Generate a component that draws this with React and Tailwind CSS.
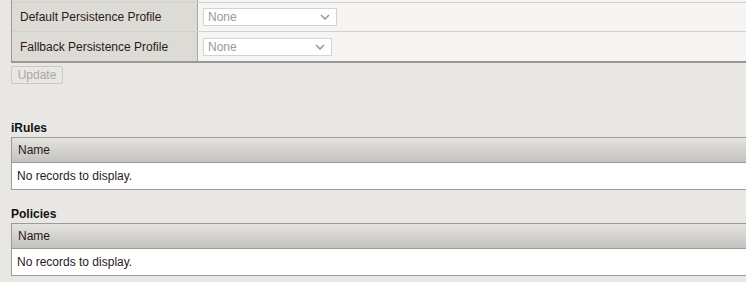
import React from "react";

function Chevron() {
  return (
    <svg width="10" height="6" viewBox="0 0 10 6" className="shrink-0">
      <path d="M1 1 L5 5 L9 1" fill="none" stroke="#9a9a9a" strokeWidth="1.6" />
    </svg>
  );
}

function Select({ w }) {
  return (
    <div
      className={`flex h-[18px] items-center justify-between border border-[#d4d3d0] bg-white pl-[4px] pr-[6px] text-[12px] text-[#9a9a9a] ${w}`}
    >
      <span>None</span>
      <Chevron />
    </div>
  );
}

function Row({ label, w, last }) {
  return (
    <div className={`flex h-[29px] ${last ? "" : "border-b border-[#d3d1cc]"}`}>
      <div className="flex w-[186px] items-center border-r border-[#a8a6a2] bg-[#dddbd6] pl-[8px] text-[12px] text-[#2a1a1a]">
        {label}
      </div>
      <div className="flex flex-1 items-center bg-[#f6f5f3] pl-[5px]">
        <Select w={w} />
      </div>
    </div>
  );
}

function Grid({ title, mt }) {
  return (
    <div className={mt}>
      <div className="h-[16px] pl-[11px] text-[12px] font-bold leading-[16px] text-[#111]">{title}</div>
      <div className="ml-[11px] mt-[1px] w-[800px] border border-[#9c9b98] bg-white">
        <div className="flex h-[25px] items-center border-b border-[#9c9b98] bg-gradient-to-b from-[#e4e3e0] to-[#c3c2be] pl-[6px] text-[12px] text-[#2a1a1a]">
          Name
        </div>
        <div className="flex h-[26px] items-center pl-[5px] text-[12px] text-[#2a1a1a]">
          No records to display.
        </div>
      </div>
    </div>
  );
}

export default function App() {
  return (
    <div
      className="h-[282px] w-[746px] overflow-hidden bg-[#e8e7e3]"
      style={{ fontFamily: '"Liberation Sans", Arial, sans-serif' }}
    >
      <div className="ml-[11px] w-[800px] border-b-2 border-l border-b-[#9a9996] border-l-[#9a9996]">
        <div className="flex h-[3px] border-b border-[#d3d1cc]">
          <div className="w-[186px] border-r border-[#a8a6a2] bg-[#dddbd6]" />
          <div className="flex-1 bg-[#f6f5f3]" />
        </div>
        <Row label="Default Persistence Profile" w="w-[134px]" />
        <Row label="Fallback Persistence Profile" w="w-[129px]" last />
      </div>
      <div className="pl-[11px] pt-[3px]">
        <div className="flex h-[18px] w-[52px] items-center justify-center rounded-[2px] border border-[#cbc9c5] bg-[#e8e7e3] text-[12px] text-[#a9a8a5]">
          Update
        </div>
      </div>
      <Grid title="iRules" mt="mt-[36px]" />
      <Grid title="Policies" mt="mt-[16px]" />
    </div>
  );
}
